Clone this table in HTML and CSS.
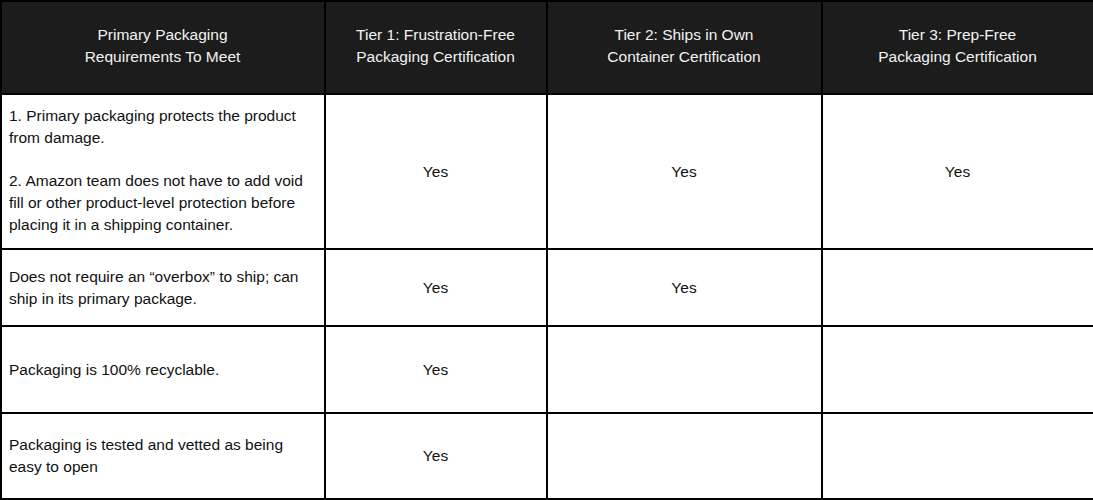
FILE: index.html
```html
<!DOCTYPE html>
<html>
<head>
<meta charset="utf-8">
<link rel="stylesheet" href="styles.css">
</head>
<body>
<table class="grid">
  <colgroup>
    <col class="c1"><col class="c2"><col class="c3"><col class="c4">
  </colgroup>
  <thead>
    <tr class="r-head">
      <th>Primary Packaging<br>Requirements To Meet</th>
      <th>Tier 1: Frustration-Free<br>Packaging Certification</th>
      <th>Tier 2: Ships in Own<br>Container Certification</th>
      <th>Tier 3: Prep-Free<br>Packaging Certification</th>
    </tr>
  </thead>
  <tbody>
    <tr class="r1">
      <td class="req"><p>1. Primary packaging protects the product from damage.</p><p>2. Amazon team does not have to add void fill or other product-level protection before placing it in a shipping container.</p></td>
      <td class="yes">Yes</td>
      <td class="yes">Yes</td>
      <td class="yes">Yes</td>
    </tr>
    <tr class="r2">
      <td class="req">Does not require an “overbox” to ship; can ship in its primary package.</td>
      <td class="yes">Yes</td>
      <td class="yes">Yes</td>
      <td class="yes"></td>
    </tr>
    <tr class="r3">
      <td class="req">Packaging is 100% recyclable.</td>
      <td class="yes">Yes</td>
      <td class="yes"></td>
      <td class="yes"></td>
    </tr>
    <tr class="r4">
      <td class="req">Packaging is tested and vetted as being easy to open</td>
      <td class="yes">Yes</td>
      <td class="yes"></td>
      <td class="yes"></td>
    </tr>
  </tbody>
</table>
</body>
</html>
```
FILE: styles.css
```css
html, body {
  margin: 0;
  padding: 0;
  background: #ffffff;
}
.grid {
  border-collapse: collapse;
  width: 1093px;
  table-layout: fixed;
  font-family: "Liberation Sans", Arial, sans-serif;
  font-size: 15.5px;
  line-height: 22px;
  color: #111111;
}
.c1 { width: 324px; }
.c2 { width: 222px; }
.c3 { width: 275px; }
.c4 { width: 272px; }
.grid th, .grid td {
  border: 2px solid #000000;
  padding: 0 8px 0 7px;
  vertical-align: middle;
}
.grid th {
  background: #1c1c1c;
  color: #f2f2f2;
  font-weight: normal;
  text-align: center;
  padding-bottom: 4px;
}
.r-head { height: 93px; }
.r1 { height: 155px; }
.r2 { height: 77px; }
.r3 { height: 87px; }
.r4 { height: 86px; }
.req p { margin: 0; }
.req p + p { margin-top: 21px; }
.r1 .req { padding-bottom: 2px; }
.yes { text-align: center; padding-bottom: 2px; }
```
